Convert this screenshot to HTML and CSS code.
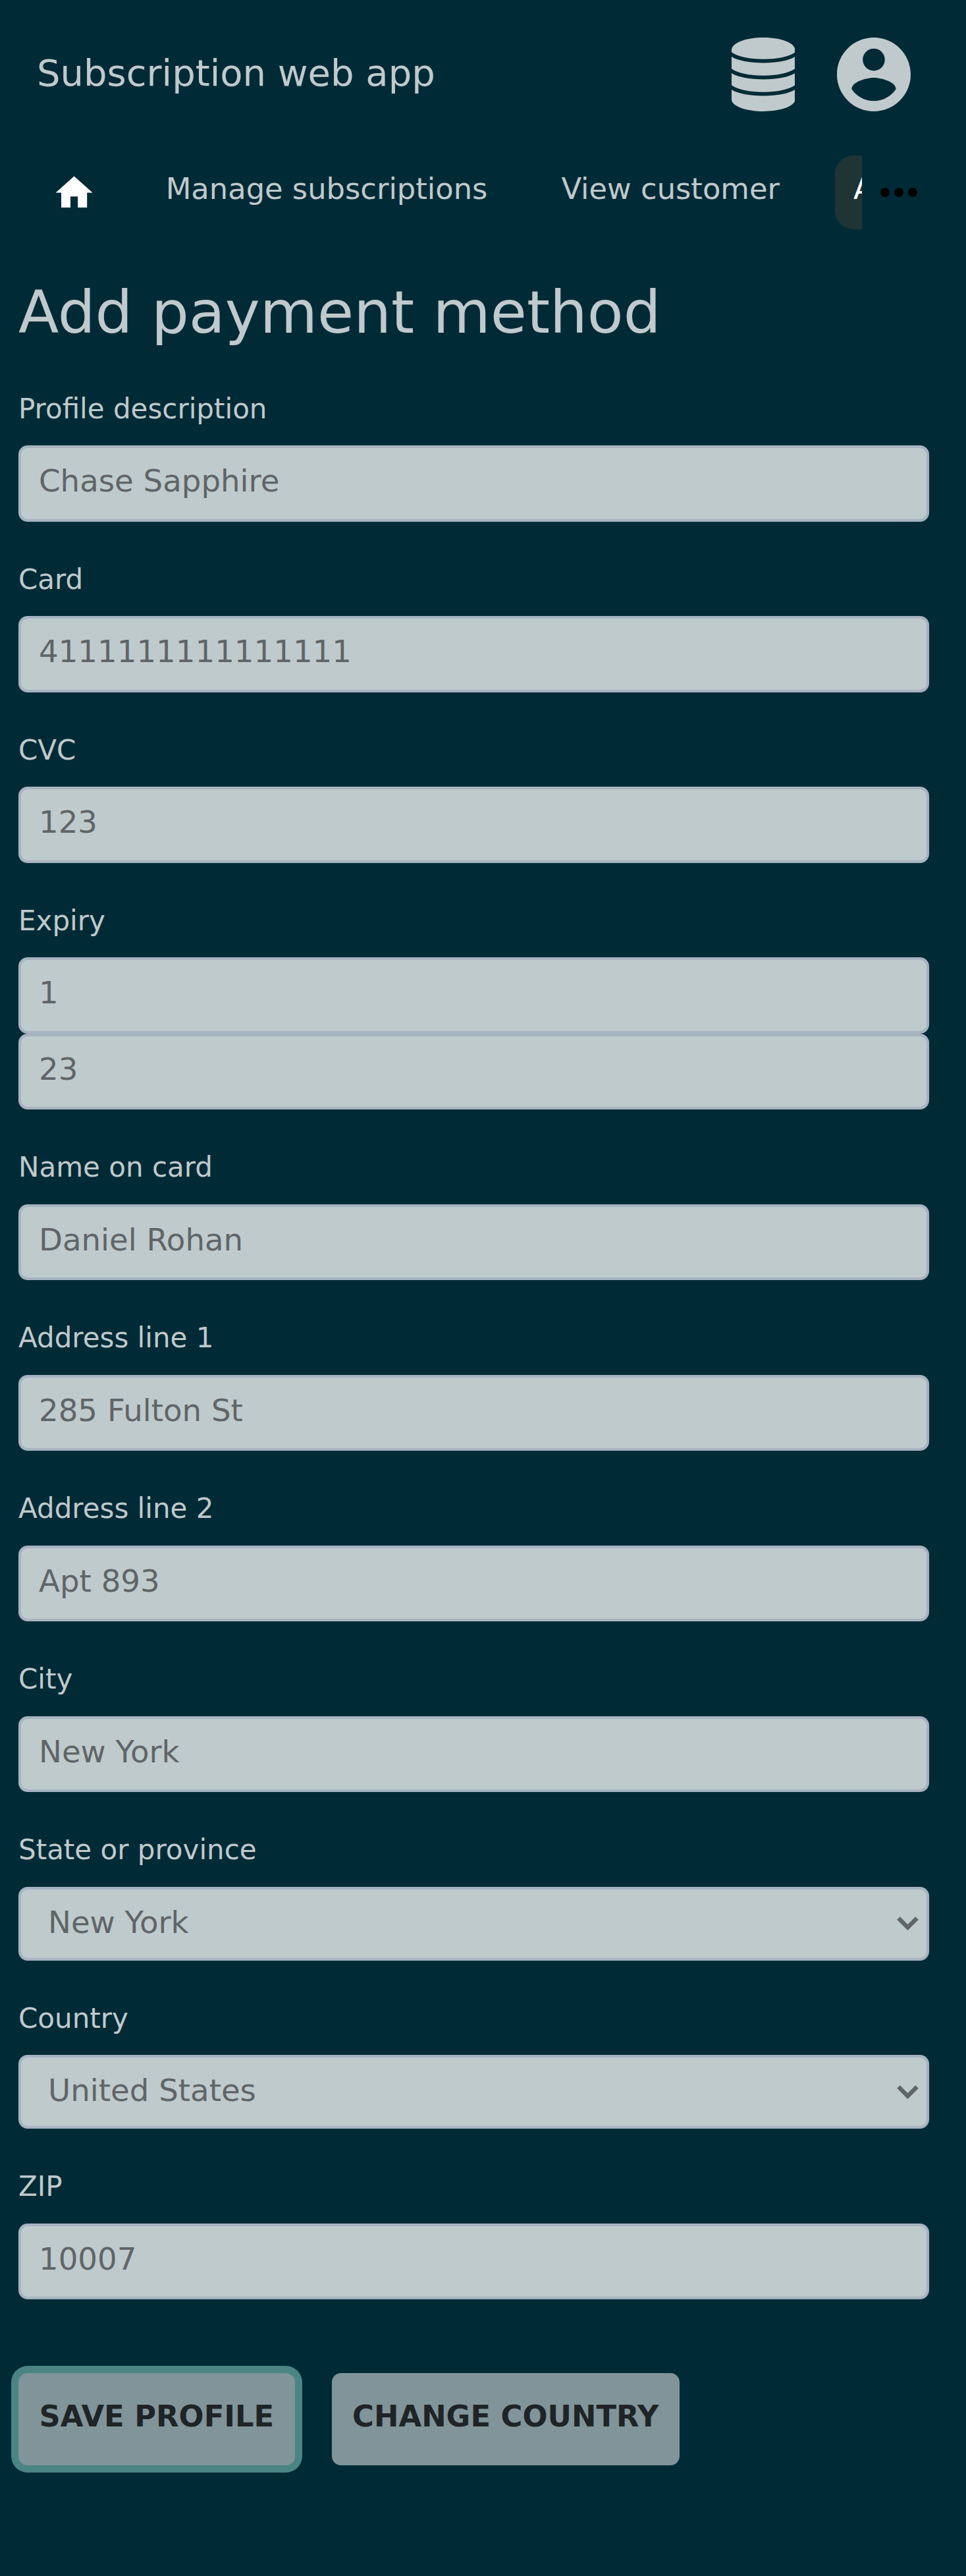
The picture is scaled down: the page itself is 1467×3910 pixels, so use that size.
FILE: index.html
```html
<!DOCTYPE html>
<html lang="en">
<head>
<meta charset="utf-8">
<title>Subscription web app</title>
<link rel="stylesheet" href="styles.css">
</head>
<body>
<header class="header">
  <div class="brand">Subscription web app</div>
  <div class="header-icons">
    <svg class="icon-database" viewBox="0 0 98 112" preserveAspectRatio="none" aria-hidden="true">
      <path d="M0 19C0 8 22 0 49 0s49 8 49 19v3.300C89 29 70 32.700 49 32.700S9 29 0 22.300zM0 29c9 6 28 9.400 49 9.400s40-3.400 49-9.400v18.200C89 54 70 57.700 49 57.700S9 54 0 47.200zM0 54c9 6 28 9.400 49 9.400s40-3.400 49-9.400v18.200C89 79 70 82.700 49 82.700S9 79 0 72.200zM0 79c9 6 28 9.400 49 9.400s40-3.400 49-9.400v15c0 10-22 18-49 18S0 104 0 94z"/>
    </svg>
    <svg class="icon-account" viewBox="2 2 20 20" aria-hidden="true">
      <path d="M12 2C6.480 2 2 6.480 2 12s4.480 10 10 10 10-4.480 10-10S17.520 2 12 2zm0 3c1.660 0 3 1.340 3 3s-1.340 3-3 3-3-1.340-3-3 1.340-3 3-3zm0 14.200c-2.500 0-4.710-1.280-6-3.220.030-1.990 4-3.080 6-3.080 1.990 0 5.970 1.090 6 3.080-1.290 1.940-3.500 3.220-6 3.220z"/>
    </svg>
  </div>
</header>
<nav class="nav">
  <div class="nav-items">
    <a class="nav-home" aria-label="Home"><svg class="icon-home" viewBox="0 0 24 24"><path d="M10 20v-6h4v6h5v-8h3L12 3 2 12h3v8z"/></svg></a>
    <a class="nav-link">Manage subscriptions</a>
    <a class="nav-link">View customer</a>
    <a class="nav-link nav-link-active">Add payment method</a>
  </div>
  <svg class="icon-more" viewBox="0 0 24 24" aria-hidden="true"><path d="M6 10c-1.100 0-2 .9-2 2s.9 2 2 2 2-.9 2-2-.9-2-2-2zm12 0c-1.100 0-2 .9-2 2s.9 2 2 2 2-.9 2-2-.9-2-2-2zm-6 0c-1.100 0-2 .9-2 2s.9 2 2 2 2-.9 2-2-.9-2-2-2z"/></svg>
</nav>
<main class="main">
  <h1 class="title">Add payment method</h1>
  <form class="form">
    <label class="field"><span class="label">Profile description</span><input class="input" value="Chase Sapphire"></label>
    <label class="field"><span class="label">Card</span><input class="input" value="4111111111111111"></label>
    <label class="field"><span class="label">CVC</span><input class="input" value="123"></label>
    <div class="field"><span class="label">Expiry</span><input class="input" value="1"><input class="input" value="23"></div>
    <label class="field"><span class="label">Name on card</span><input class="input" value="Daniel Rohan"></label>
    <label class="field"><span class="label">Address line 1</span><input class="input" value="285 Fulton St"></label>
    <label class="field"><span class="label">Address line 2</span><input class="input" value="Apt 893"></label>
    <label class="field"><span class="label">City</span><input class="input" value="New York"></label>
    <div class="field"><span class="label">State or province</span>
      <div class="select"><span>New York</span><svg class="chevron" viewBox="0 0 33 21"><path d="M2.500 2.500 16.500 16.500 30.500 2.500"/></svg></div></div>
    <div class="field"><span class="label">Country</span>
      <div class="select"><span>United States</span><svg class="chevron" viewBox="0 0 33 21"><path d="M2.500 2.500 16.500 16.500 30.500 2.500"/></svg></div></div>
    <label class="field"><span class="label">ZIP</span><input class="input" value="10007"></label>
    <div class="actions">
      <button type="button" class="button button-focus">SAVE PROFILE</button>
      <button type="button" class="button">CHANGE COUNTRY</button>
    </div>
  </form>
</main>
</body>
</html>
```
FILE: styles.css
```css
* {
  box-sizing: border-box;
}

body {
  margin: 0;
  min-height: 3910px;
  background: #002b36;
  color: #c0c9cc;
  font-family: "DejaVu Sans", sans-serif;
  font-size: 44.8px;
}

svg {
  display: block;
  flex: none;
}

.header {
  display: flex;
  align-items: center;
  justify-content: space-between;
  height: 225px;
  padding: 0 84px 0 56px;
}

.brand {
  padding-bottom: 3px;
  font-size: 56px;
  line-height: 66px;
}

.header-icons {
  display: flex;
  gap: 64px;
  fill: #c0cacc;
}

.icon-database {
  width: 96.5px;
  height: 112px;
}

.icon-account {
  width: 112px;
  height: 112px;
}

.nav {
  display: flex;
  align-items: center;
  height: 133px;
}

.nav-items {
  display: flex;
  align-items: center;
  gap: 56px;
  width: 1309px;
  padding-left: 50.5px;
  overflow: hidden;
}

.nav-home {
  padding: 5px 22px 2px 28px;
}

.icon-home {
  width: 67.2px;
  height: 67.2px;
  fill: #fff;
}

.nav-link {
  flex: none;
  height: 112px;
  padding: 25px 28px 0;
  border-radius: 28px;
  line-height: 52px;
  white-space: nowrap;
}

.nav-link-active {
  background: #1e3435;
  color: #fff;
}

.icon-more {
  width: 84px;
  height: 84px;
  margin-left: 14px;
}

.main {
  padding: 0 56px 0 28px;
}

.title {
  margin: 64px 0 0;
  font-size: 89.6px;
  line-height: 104px;
  font-weight: 400;
}

.form {
  display: flex;
  flex-direction: column;
  gap: 63px;
  margin-top: 69.7px;
}

.field {
  display: flex;
  flex-direction: column;
}

.label {
  margin-bottom: 31.5px;
  font-size: 42px;
  line-height: 49px;
}

.input,
.select {
  width: 100%;
  height: 115.5px;
  margin: 0;
  padding: 23px 27px 30px;
  border: 4px solid #a6b3c1;
  border-radius: 14px;
  background: #bfcacc;
  color: #606567;
  font-family: inherit;
  font-size: 46.667px;
  line-height: 54px;
}

.select {
  display: flex;
  align-items: center;
  justify-content: space-between;
  height: 112px;
  padding: 23px 12px 27px 41px;
}

.chevron {
  width: 33px;
  height: 21px;
  margin-top: 4px;
  fill: none;
  stroke: #606567;
  stroke-width: 6.5px;
}

.actions {
  display: flex;
  gap: 56px;
  margin-top: 49px;
}

.button {
  height: 140px;
  padding: 0 31.5px 10px;
  border: 0;
  border-radius: 14px;
  background: #80949a;
  color: #1f2426;
  font-family: inherit;
  font-size: 44.8px;
  font-weight: 700;
}

.button-focus {
  box-shadow: 0 0 0 11px #4a8583;
}
```
